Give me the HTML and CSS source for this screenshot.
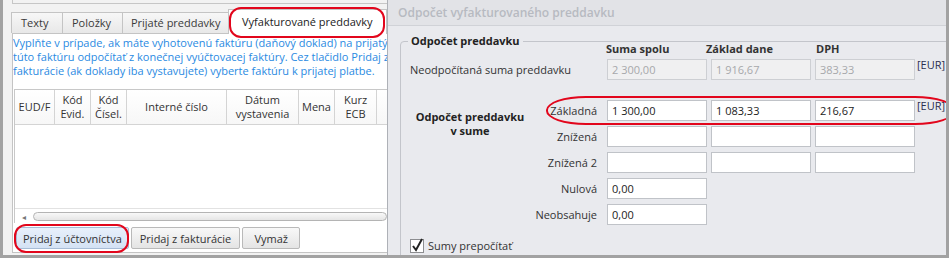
FILE: index.html
```html
<!DOCTYPE html>
<html lang="sk">
<head>
<meta charset="UTF-8">
<title>Odpočet vyfakturovaného preddavku</title>
<link rel="stylesheet" href="styles.css">
</head>
<body>

<div class="window">
  <div class="left">
    <div class="edge"></div>
    <div class="tabs">
      <span class="tab">Texty</span>
      <span class="tab">Položky</span>
      <span class="tab tight">Prijaté preddavky</span>
      <span class="tab active marked">Vyfakturované preddavky</span>
    </div>
    <div class="page">
      <p class="hint">Vyplňte v prípade, ak máte vyhotovenú faktúru (daňový doklad) na prijatý preddavok a chcete<br>túto faktúru odpočítať z konečnej vyúčtovacej faktúry. Cez tlačidlo Pridaj z účtovníctva alebo<br>fakturácie (ak doklady iba vystavujete) vyberte faktúru k prijatej platbe.</p>
      <div class="grid">
        <div class="grid-head">
          <div>EUD/F</div>
          <div>Kód<br>Evid.</div>
          <div>Kód<br>Čísel.</div>
          <div>Interné číslo</div>
          <div>Dátum<br>vystavenia</div>
          <div>Mena</div>
          <div>Kurz<br>ECB</div>
          <div></div>
        </div>
        <div class="grid-body"></div>
        <div class="hscroll">
          <span class="arrow">◂</span>
          <span class="track"></span>
        </div>
      </div>
      <div class="buttons">
        <button class="btn hot marked">Pridaj z účtovníctva</button>
        <button class="btn">Pridaj z fakturácie</button>
        <button class="btn wide">Vymaž</button>
      </div>
    </div>
  </div>

  <div class="right">
    <div class="title">Odpočet vyfakturovaného preddavku</div>
    <div class="group">
      <span class="group-title">Odpočet preddavku</span>
      <div class="heads">
        <span>Suma spolu</span>
        <span>Základ dane</span>
        <span>DPH</span>
      </div>
      <div class="row">
        <label class="label long">Neodpočítaná suma preddavku</label>
        <input class="in" value="2 300,00" disabled>
        <input class="in" value="1 916,67" disabled>
        <input class="in" value="383,33" disabled>
        <span class="cur">[EUR]</span>
      </div>
      <div class="block">
        <div class="block-title">Odpočet preddavku<br>v sume</div>
        <div class="block-rows">
          <div class="row marked">
            <label class="label short">Základná</label>
            <input class="in" value="1 300,00">
            <input class="in" value="1 083,33">
            <input class="in" value="216,67">
            <span class="cur">[EUR]</span>
          </div>
          <div class="row">
            <label class="label short">Znížená</label>
            <input class="in">
            <input class="in">
            <input class="in">
          </div>
        </div>
      </div>
      <div class="row">
        <label class="label">Znížená 2</label>
        <input class="in">
        <input class="in">
        <input class="in">
      </div>
      <div class="row">
        <label class="label">Nulová</label>
        <input class="in" value="0,00">
      </div>
      <div class="row">
        <label class="label">Neobsahuje</label>
        <input class="in" value="0,00">
      </div>
      <div class="check">
        <svg width="16" height="16" viewBox="0 0 16 16">
          <rect x="0.5" y="2.5" width="13" height="13" fill="#fff" stroke="#8c8d90"/>
          <path d="M3 9 L6 13 L12 2" fill="none" stroke="#222" stroke-width="2"/>
        </svg>
        <span>Sumy prepočítať</span>
      </div>
    </div>
  </div>
</div>

</body>
</html>
```

FILE: styles.css
```css
body { margin: 0; font-family: "Open Sans", "Noto Sans", sans-serif; color: #333; background: #fff; }

.window { width: 949px; height: 258px; box-sizing: border-box; display: flex; border: 3px solid #a2a2a2; border-top: 0; background: #f2f2f2; }

/* left side: tab control */
.left { width: 384px; overflow: hidden; flex-shrink: 0; }
.edge { height: 3px; margin-left: 9px; border-left: 1px solid #c6c6c6; border-bottom: 1px solid #c6c6c6; }
.tabs { display: flex; align-items: flex-end; height: 24px; margin: 5px 0 0 8px; position: relative; z-index: 1; }
.tab { height: 21px; min-width: 52px; line-height: 20px; padding: 0 11px 0 9px; font-size: 11px; color: #3a3a3a; box-sizing: border-box; border: 1px solid #c4c4c4; border-bottom: 0; margin-left: -1px; background: linear-gradient(#f7f7f7, #e8e8e8); white-space: nowrap; }
.tab:first-child { margin-left: 0; }
.tab.tight { padding: 0 8px; }
.tab.active { height: 25px; line-height: 23px; padding: 0 14px 0 13px; background: #fff; margin-bottom: -1px; color: #222; }

.page { margin-left: 9px; height: 220px; box-sizing: border-box; border: 1px solid #c4c4c4; border-right: 0; background: #fff; }
.hint { margin: 2px 0 0; font-size: 11px; line-height: 14px; color: #2a8ae2; white-space: nowrap; }

.grid { margin: 11px 0 0 1px; border-left: 1px solid #c8c8c8; border-top: 1px solid #c8c8c8; }
.grid-head { display: grid; grid-template-columns: 40px 36px 36px 100px 72px 36px 42px 80px; height: 34px; border-bottom: 1px solid #d4d4d4; background: linear-gradient(#fff, #f7f7f7); }
.grid-head div { display: flex; align-items: center; justify-content: center; text-align: center; font-size: 11px; line-height: 14px; color: #333; border-right: 1px solid #d4d4d4; }
.grid-body { height: 83px; border-bottom: 1px solid #e2e2e2; }
.hscroll { display: flex; align-items: center; height: 14px; }
.arrow { width: 18px; text-align: center; font-size: 8px; color: #777; }
.track { flex: 1; height: 7px; border: 1px solid #b4b4b4; border-radius: 5px; background: linear-gradient(#f8f8f8, #e6e6e6); }

.buttons { display: flex; gap: 2px; margin: 4px 0 0 3px; }
.btn { height: 22px; padding: 0 8px; font-family: inherit; font-size: 11px; color: #333; border: 1px solid #b9b9b9; border-radius: 2px; background: linear-gradient(#f8f8f8, #e4e4e4); white-space: nowrap; }
.btn.hot { background: linear-gradient(#e8f0fb, #d4e2f4); border-color: #a7bcd6; padding: 0 6px; }
.btn.wide { width: 58px; }

/* red highlights drawn over the screenshot */
.marked { position: relative; }
.marked::after { content: ""; position: absolute; border: 2px solid #e2061c; pointer-events: none; }
.tab.marked::after { top: -3px; bottom: -4px; left: 0; right: 1px; border-radius: 12px; }
.btn.marked::after { top: -4px; bottom: -5px; left: -3px; right: -1px; border-radius: 12px; }
.row.marked::after { top: -4px; bottom: -4px; left: 16px; right: -4px; border-radius: 40px / 14px; }

/* right side: dialog */
.right { flex: 1; border-left: 1px solid #aeb1b7; background: #e9eaee; overflow: hidden; font-size: 11px; }
.title { height: 25px; line-height: 25px; padding-left: 10px; font-size: 12px; font-weight: 600; color: #b7bac1; background: #e2e3e7; border-bottom: 1px solid #d0d2d7; }

.group { position: relative; margin: 15px -6px 0 12px; padding-left: 9px; border: 1px solid #c3c5cb; border-radius: 4px; height: 240px; }
.group-title { position: absolute; top: -9px; left: 7px; padding: 0 3px; font-weight: bold; font-size: 11px; line-height: 16px; color: #222; background: #e9eaee; }

.heads { display: flex; height: 14px; padding-left: 196px; font-weight: bold; line-height: 14px; color: #333; }
.heads span:nth-child(1) { width: 100px; }
.heads span:nth-child(2) { width: 110px; }

.row { display: flex; gap: 4px; height: 21px; margin-top: 5px; }
.heads + .row { margin-top: 3px; }
.label { width: 187px; padding-right: 6px; text-align: right; line-height: 21px; color: #333; white-space: nowrap; }
.label.long { text-align: left; }
.label.short { width: 67px; }
.in { width: 100px; height: 21px; box-sizing: border-box; padding: 0 4px; font-family: inherit; font-size: 11px; color: #222; background: #fff; border: 1px solid #c0c3c8; outline: none; }
.in:disabled { background: #f0f0f1; color: #a7a8ab; border-color: #cdcfd3; }
.cur { font-size: 11px; line-height: 12px; color: #2b2f4f; margin-left: -2px; }

.block { display: flex; margin-top: 20px; }
.block .row:first-child { margin-top: 0; }
.block-title { width: 120px; align-self: center; text-align: center; font-weight: bold; line-height: 14px; color: #222; padding-top: 1px; }
.block-rows { flex: 1; }

.check { display: flex; align-items: center; gap: 2px; margin-top: 12px; color: #333; }
```
